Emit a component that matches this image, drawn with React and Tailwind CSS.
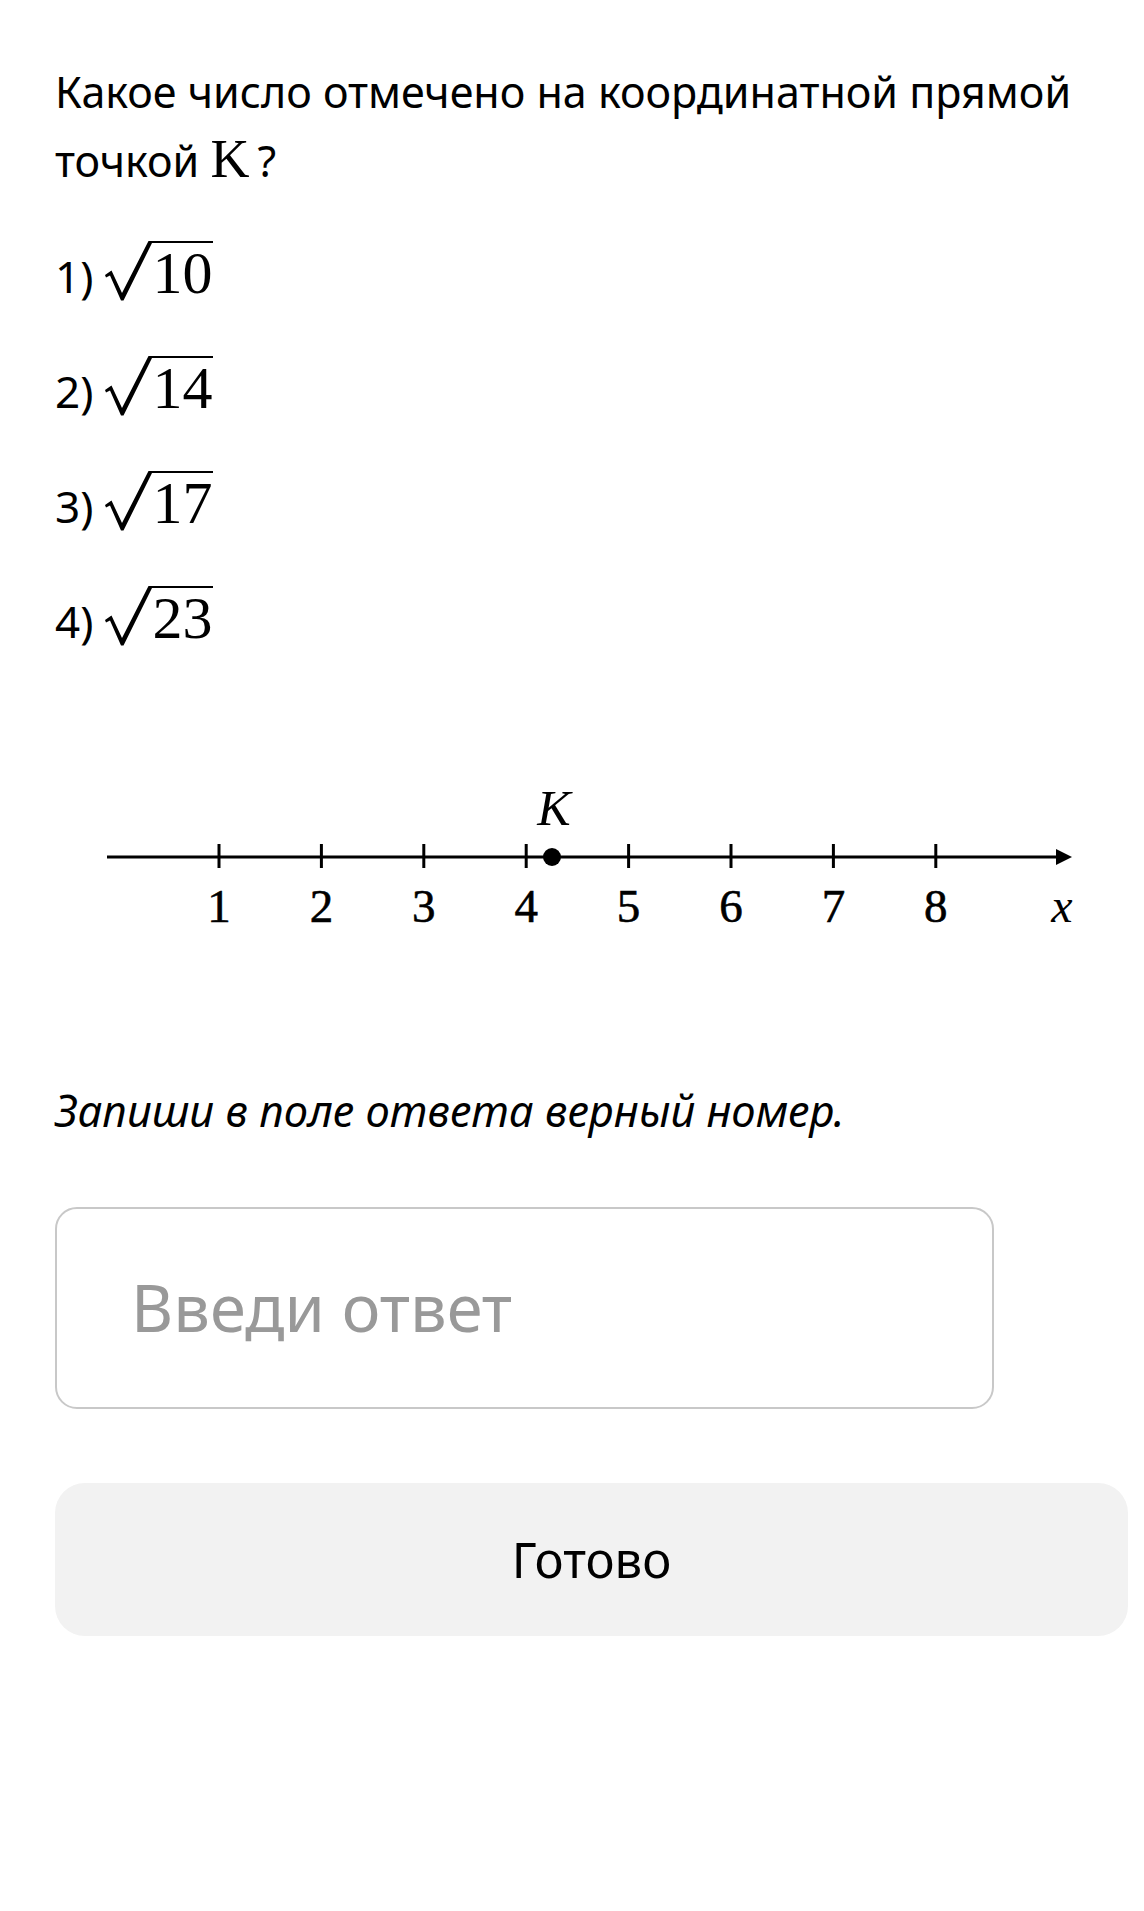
import React from "react";

const OPTIONS = [
  { id: 1, value: "10" },
  { id: 2, value: "14" },
  { id: 3, value: "17" },
  { id: 4, value: "23" },
];

// ticks for the number line, 1..8
const TICKS = [1, 2, 3, 4, 5, 6, 7, 8];
const tickX = (n) => 119 + (n - 1) * 102.4;

function Sqrt({ value }) {
  return (
    <span className="relative inline-flex items-start ml-[12px] pl-[45px]">
      <svg
        className="absolute left-0 top-0"
        width="47"
        height="60"
        viewBox="0 0 47 60"
      >
        <path
          d="M0 34 L6.5 29.5 L17 52 L43.5 0 L47 0 L47 2 L18.5 59.5 L16 59.5 L5 34.5 L1 36.5 Z"
          fill="#000"
        />
      </svg>
      <span className="inline-block border-t-2 border-black leading-none text-[60px] font-['Liberation_Serif',serif] pl-[2px] pr-[1px]">
        {value}
      </span>
    </span>
  );
}

function NumberLine() {
  return (
    <svg width="1000" height="170" viewBox="0 0 1000 170" className="block ml-[45px] mt-[69px]">
      <line x1="7" y1="87" x2="962" y2="87" stroke="#000" strokeWidth="3" />
      <path d="M956 79 L972 87 L956 95 Z" fill="#000" />
      {TICKS.map((n) => (
        <g key={n}>
          <line x1={tickX(n)} y1="74" x2={tickX(n)} y2="98" stroke="#000" strokeWidth="3" />
          <text
            x={tickX(n)}
            y="152"
            textAnchor="middle"
            fontFamily="Liberation Serif, serif"
            fontSize="47"
            stroke="#000"
            strokeWidth="0.6"
            fill="#000"
          >
            {n}
          </text>
        </g>
      ))}
      <circle cx="452" cy="87" r="9" fill="#000" />
      <text
        x="454"
        y="55"
        textAnchor="middle"
        fontFamily="Liberation Serif, serif"
        fontStyle="italic"
        fontSize="50"
        fill="#000"
      >
        K
      </text>
      <text
        x="962"
        y="152"
        textAnchor="middle"
        fontFamily="Liberation Serif, serif"
        fontStyle="italic"
        fontSize="48"
        fill="#000"
      >
        x
      </text>
    </svg>
  );
}

export default function App() {
  return (
    <div className="min-h-screen bg-white text-black font-['Noto_Sans',sans-serif] pl-[55px] pr-[16px] pt-[57px]">
      {/* question */}
      <p className="text-[43px] leading-[69px] max-w-[1040px]">
        Какое число отмечено на координатной прямой точкой{" "}
        <span className="font-['Liberation_Serif',serif] text-[54px] leading-none">K</span>
        <span className="ml-[8px]">?</span>
      </p>

      {/* answer options */}
      <div className="mt-[46px] flex flex-col">
        {OPTIONS.map((opt) => (
          <div key={opt.id} className="flex items-baseline h-[115px]">
            <span className="text-[44px] leading-none">{opt.id})</span>
            <Sqrt value={opt.value} />
          </div>
        ))}
      </div>

      <NumberLine />

      <p className="mt-[149px] text-[43.5px] leading-none italic">
        Запиши в поле ответа верный номер.
      </p>

      <div className="mt-[74px] w-[939px] h-[202px] border-2 border-[#c8c8c8] rounded-[22px] flex items-center pl-[74px]">
        <span className="text-[65px] leading-none text-[#999999]">Введи ответ</span>
      </div>

      <button className="mt-[74px] w-full h-[153px] rounded-[30px] bg-[#f2f2f2] flex items-center justify-center">
        <span className="text-[49px] leading-none text-black">Готово</span>
      </button>
    </div>
  );
}
